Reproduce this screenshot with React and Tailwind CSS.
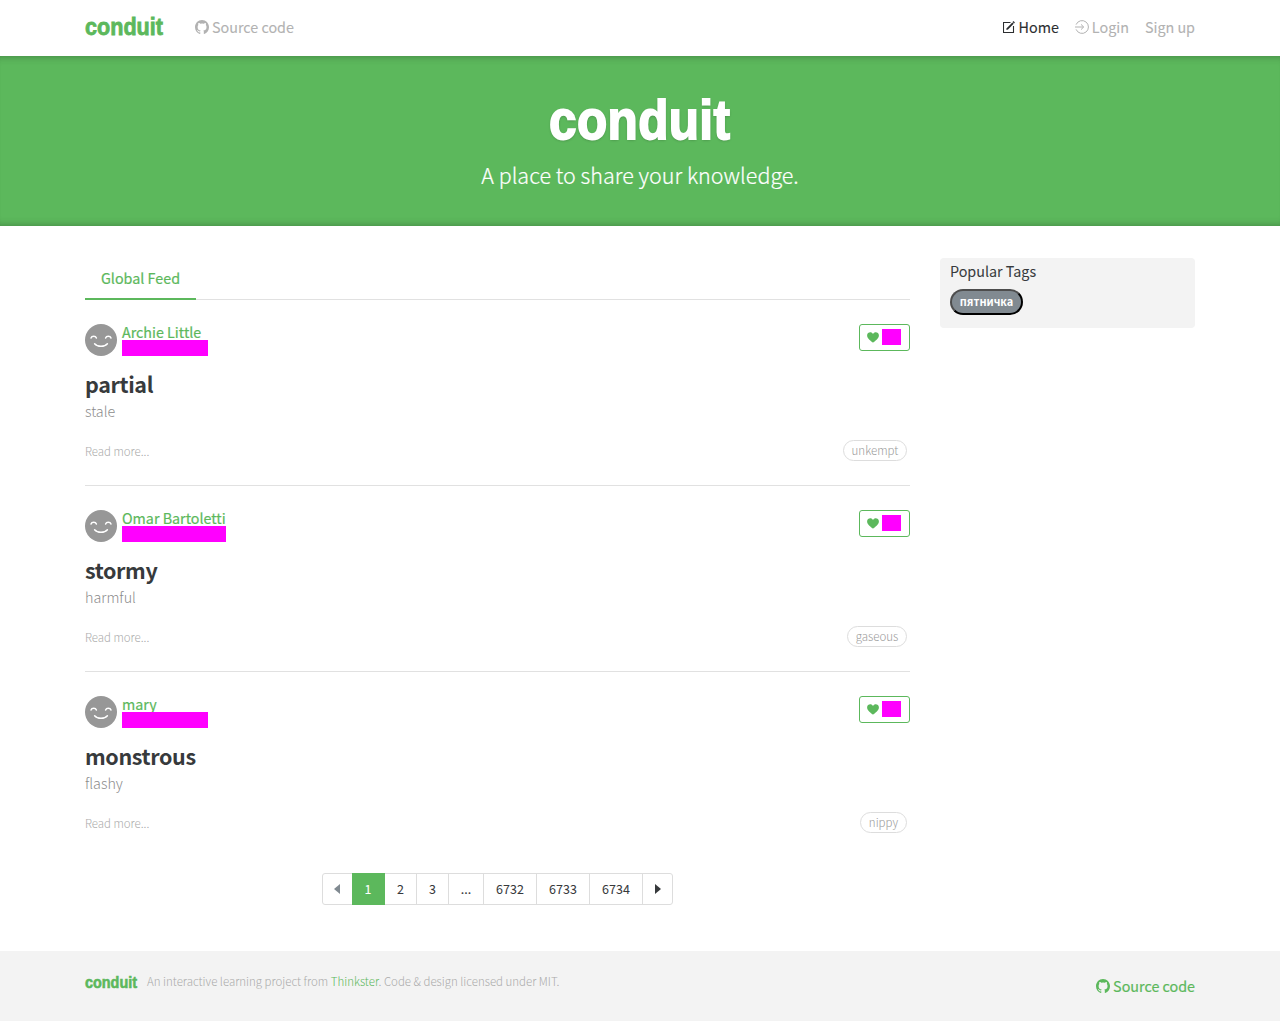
import React from 'react';

const articles = [
  { author: 'Archie Little', title: 'partial', about: 'stale', tag: 'unkempt', date: 'w-[86px]', tagWidth: 'w-[64px]' },
  { author: 'Omar Bartoletti', title: 'stormy', about: 'harmful', tag: 'gaseous', date: 'w-[104px]', tagWidth: 'w-[60px]' },
  { author: 'mary', title: 'monstrous', about: 'flashy', tag: 'nippy', date: 'w-[86px]', tagWidth: 'w-[47px]' },
];

const pages = [
  { label: '1', cls: 'w-[33px] bg-[#5cb85c] text-white border-[#5cb85c]' },
  { label: '2', cls: 'w-[32px] border-[#ddd]' },
  { label: '3', cls: 'w-[32px] border-[#ddd]' },
  { label: '...', cls: 'w-[35px] border-[#ddd]' },
  { label: '6732', cls: 'w-[53px] border-[#ddd]' },
  { label: '6733', cls: 'w-[53px] border-[#ddd]' },
  { label: '6734', cls: 'w-[53px] border-[#ddd]' },
];

function Github() {
  return (
    <svg viewBox="0 0 16 16" className="h-[14px] w-[14px] shrink-0" fill="currentColor">
      <path d="M8 0C3.58 0 0 3.67 0 8.2c0 3.62 2.3 6.7 5.5 7.78.4.07.5-.18.5-.4v-1.5c-2.2.5-2.7-.96-2.7-.96-.36-.94-.89-1.2-.89-1.2-.73-.5.05-.5.05-.5.8.06 1.23.84 1.23.84.7 1.25 1.9.89 2.36.68.06-.52.27-.88.5-1.08C4.6 11.66 3 11 3 7.9c0-.9.3-1.6.82-2.2-.1-.2-.36-1.03.07-2.15 0 0 .67-.22 2.2.84a7.6 7.6 0 0 1 4 0c1.53-1.06 2.2-.84 2.2-.84.43 1.12.17 1.95.08 2.15.5.6.81 1.3.81 2.2 0 3.1-1.85 3.74-3.64 3.96.29.25.54.74.54 1.5v2.22c0 .22.1.48.5.4C13.8 14.9 16 11.8 16 8.2 16 3.67 12.42 0 8 0Z" />
    </svg>
  );
}

function Compose() {
  return (
    <svg viewBox="0 0 12 12" className="mr-px h-[12px] w-[12px] shrink-0" fill="none" stroke="currentColor">
      <path d="M7.5 1.5h-7v10h10V5" strokeWidth="1.1" />
      <path d="M4.1 8.1 10 2.1" strokeWidth="1.9" />
      <path d="m10.3 1.7.9-.9" strokeWidth="2" />
      <path d="m3.3 9 .4-1.7 1.1 1.1Z" fill="currentColor" stroke="none" />
    </svg>
  );
}

function Enter() {
  return (
    <svg viewBox="0 0 14 14" className="h-[14px] w-[14px] shrink-0" fill="none" stroke="currentColor" strokeWidth="1">
      <path d="M1.1 4.6a6.4 6.4 0 1 1 0 4.8M0 7h8.5M6 4.4 8.7 7 6 9.6" />
    </svg>
  );
}

function Avatar() {
  return (
    <svg viewBox="0 0 32 32" className="h-8 w-8" fill="none" stroke="white" strokeWidth="1.5" strokeLinecap="round">
      <circle cx="16" cy="16" r="16" fill="#979797" stroke="none" />
      <path d="M6 14c.8-2.2 4.6-2.2 5.4 0M20.6 14c.8-2.2 4.6-2.2 5.4 0M9.6 19.8c2.9 3.4 9.9 3.4 12.8 0" />
    </svg>
  );
}

function Heart() {
  return (
    <svg viewBox="0 0 12 11" className="h-[11px] w-[12px]" fill="currentColor">
      <path d="M6 10.7C4.2 9.2.1 6.6.1 3.5.1.3 4.4-.9 6 2 7.6-.9 11.9.3 11.9 3.5c0 3.1-4.1 5.7-5.9 7.2Z" />
    </svg>
  );
}

function Article({ author, title, about, tag, date, tagWidth }) {
  return (
    <article className="h-[186px] border-t border-[#e1e1e1] pt-6">
      <div className="flex h-8 justify-between">
        <div className="flex">
          <Avatar />
          <div className="ml-[5px]">
            <a className="block h-4 whitespace-nowrap text-[14.3px] leading-[15px] text-[#5cb85c] [-webkit-text-stroke:0.2px]">{author}</a>
            <div className={'relative h-4 bg-[#ff00ff] ' + date} />
          </div>
        </div>
        <button className="flex h-[27px] w-[51px] items-center rounded-[3px] border border-[#5cb85c] pb-px pl-[7px] text-[#5cb85c]">
          <Heart />
          <span className="ml-[3px] h-4 w-[19px] bg-[#ff00ff]" />
        </button>
      </div>
      <h2 className="mt-[14px] h-[26px] text-[21.5px] font-bold leading-[27px] tracking-[-0.38px] text-[#373a3c]">{title}</h2>
      <p className="h-6 text-[14.33px] font-light leading-[29px] text-[#8c8c8c]">{about}</p>
      <div className="mt-5 flex justify-between pr-[3px]">
        <span className="text-[11.45px] font-light leading-[23px] text-[#aaa]">Read more...</span>
        <span className={'flex h-[21px] items-center justify-center rounded-full border border-[#ddd] text-[11.5px] font-light leading-[19px] text-[#999] ' + tagWidth}>{tag}</span>
      </div>
    </article>
  );
}

export default function App() {
  return (
    <div className="min-h-[1021px] bg-white font-['Noto_Sans_CJK_SC',sans-serif] text-[14.33px] text-[#373a3c]">
      <nav className="mx-auto flex h-14 w-[1110px] items-center justify-between leading-6 text-[#b2b2b2]">
        <div className="flex items-center">
          <div className="w-[110px]">
            <a className="inline-block origin-left scale-x-[0.9] pb-px font-['Liberation_Sans',sans-serif] text-[24px] font-bold text-[#5cb85c] [-webkit-text-stroke:0.8px]">conduit</a>
          </div>
          <a className="flex items-center gap-[3px] pb-[2px] [-webkit-text-stroke:0.1px]"><Github />Source code</a>
        </div>
        <div className="flex gap-4 pb-[2px] [-webkit-text-stroke:0.1px]">
          <a className="flex items-center gap-[3px] text-[#2c2e30]"><Compose />Home</a>
          <a className="flex items-center gap-[3px]"><Enter />Login</a>
          <a>Sign up</a>
        </div>
      </nav>
      <header className="flex h-[170px] flex-col items-center bg-[#5cb85c] pt-[33px] text-white shadow-[inset_0_8px_8px_-8px_rgba(0,0,0,0.3),inset_0_-8px_8px_-8px_rgba(0,0,0,0.3)]">
        <h1 className="h-[62px] scale-x-[0.9] font-['Liberation_Sans',sans-serif] text-[55px] font-bold leading-[62px] tracking-[0.4px] [-webkit-text-stroke:1.8px] [text-shadow:0_1px_3px_rgba(0,0,0,0.3)]">conduit</h1>
        <p className="mt-[7px] text-[21.5px] font-light leading-[34px] [-webkit-text-stroke:0.2px]">A place to share your knowledge.</p>
      </header>
      <main className="mx-auto flex h-[725px] w-[1110px] justify-between pt-8">
        <section className="w-[825px]">
          <div className="flex h-[41px]">
            <a className="z-10 h-[42px] w-[111px] border-b-2 border-[#5cb85c] text-center leading-[40px] text-[#5cb85c] [-webkit-text-stroke:0.2px]">Global Feed</a>
          </div>
          {articles.map((a) => <Article key={a.title} {...a} />)}
          <ul className="ml-[237px] mt-4 flex h-8 w-[351px] rounded-[3px] border border-[#ddd] text-[12.5px] [-webkit-text-stroke:0.05px]">
            <li className="flex w-[29px] items-center justify-center pr-px text-[#818a91]">
              <svg viewBox="0 0 6 10" className="h-[10px] w-[6px]" fill="currentColor"><path d="M6 0v10L0 5Z" /></svg>
            </li>
            {pages.map((p) => (
              <li key={p.label} className={'-mt-px flex h-8 items-center justify-center border-y border-r leading-[30px] ' + p.cls}>{p.label}</li>
            ))}
            <li className="flex flex-1 items-center justify-center">
              <svg viewBox="0 0 6 10" className="h-[10px] w-[6px]" fill="currentColor"><path d="M0 0v10l6-5Z" /></svg>
            </li>
          </ul>
        </section>
        <aside className="h-[70px] w-[255px] rounded-[4px] bg-[#f3f3f3] px-[10px]">
          <p className="h-[31px] leading-[25px] [-webkit-text-stroke:0.05px]">Popular Tags</p>
          <button className="flex h-[26px] w-[73px] items-center justify-center rounded-full border-2 border-t-[#4d4d4d] border-l-[#4d4d4d] border-r-black border-b-black bg-[#818a91] pb-[2px] text-[10.9px] font-bold leading-5 text-white">пятничка</button>
        </aside>
      </main>
      <footer className="h-[70px] bg-[#f3f3f3]">
        <div className="mx-auto flex w-[1110px] justify-between">
          <div className="flex pt-5">
            <div className="w-[62px]">
              <a className="inline-block origin-left scale-x-[0.9] font-['Liberation_Sans',sans-serif] text-[16px] font-bold leading-[20px] text-[#5cb85c] [-webkit-text-stroke:0.6px]">conduit</a>
            </div>
            <p className="text-[11.47px] font-light leading-[21px] text-[#aaa]">An interactive learning project from <a className="text-[#5cb85c]">Thinkster</a>. Code &amp; design licensed under MIT.</p>
          </div>
          <a className="flex items-center gap-[3px] pt-[23px] leading-6 text-[#5cb85c] [-webkit-text-stroke:0.2px]"><Github />Source code</a>
        </div>
      </footer>
    </div>
  );
}
